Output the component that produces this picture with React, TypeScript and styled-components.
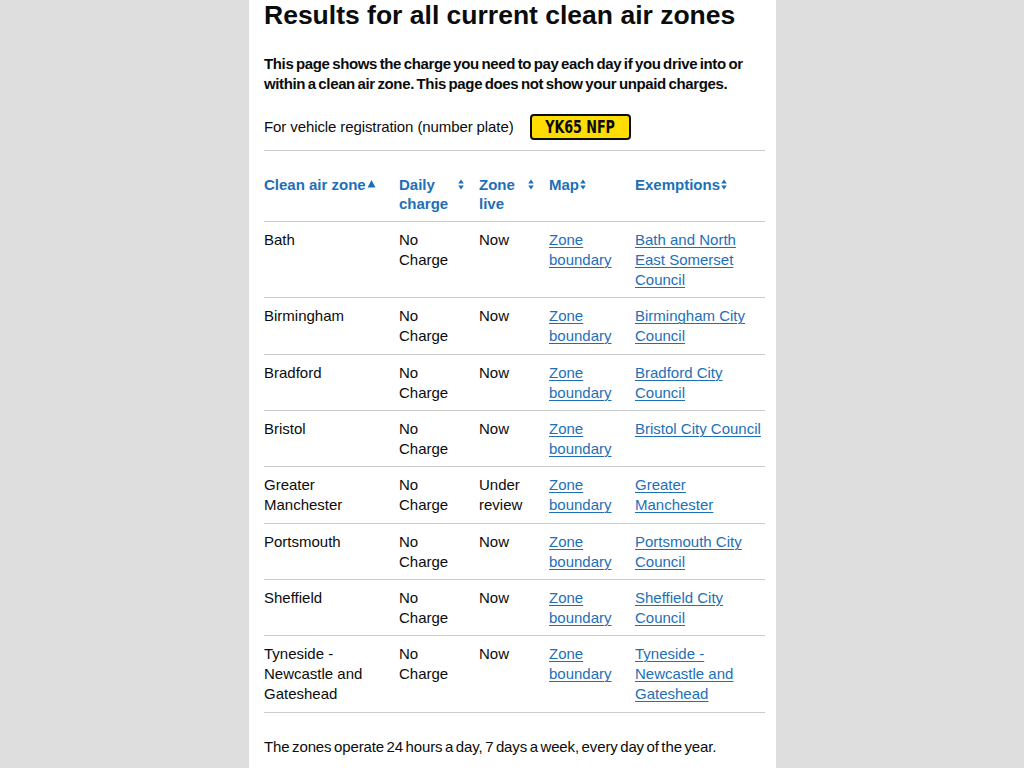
import * as React from 'react';
import styled, { createGlobalStyle } from 'styled-components';

const COLORS = {
  text: '#0b0c0c',
  link: '#1d70b8',
  border: '#c9cbcc',
  page: '#dedede',
  plate: '#ffdd00',
};

const FONT = '"Liberation Sans", Arial, sans-serif';

const GlobalStyle = createGlobalStyle`
  html, body {
    margin: 0;
    padding: 0;
    background: ${COLORS.page};
  }
  body {
    font-family: ${FONT};
    color: ${COLORS.text};
    -webkit-font-smoothing: antialiased;
  }
`;

const Page = styled.div`
  display: flex;
  justify-content: center;
  min-height: 768px;
`;

const Column = styled.main`
  box-sizing: border-box;
  width: 527px;
  margin-left: 1px;
  background: #ffffff;
  padding: 0 11px 0 15px;
`;

const Title = styled.h1`
  margin: 0;
  font-size: 26.5px;
  line-height: 30px;
  font-weight: 700;
`;

const Lead = styled.p`
  margin: 24px 0 0;
  font-size: 15px;
  line-height: 20px;
  font-weight: 700;
  letter-spacing: -0.36px;
  word-spacing: -1.2px;
`;

const PlateRow = styled.div`
  display: flex;
  align-items: center;
  gap: 16px;
  margin-top: 20px;
  font-size: 15px;
  line-height: 20px;
  letter-spacing: -0.1px;
`;

const Plate = styled.span`
  box-sizing: border-box;
  display: inline-flex;
  align-items: center;
  justify-content: center;
  width: 101px;
  height: 26px;
  background: ${COLORS.plate};
  border: 2px solid ${COLORS.text};
  border-radius: 4px;
  font-family: "DejaVu Sans Condensed", "DejaVu Sans", sans-serif;
  font-stretch: condensed;
  font-weight: 700;
  font-size: 18px;
  line-height: 20px;
`;

const PlateText = styled.span`
  display: inline-block;
  white-space: nowrap;
  transform: scaleX(0.79);
`;

const Divider = styled.hr`
  margin: 10px 0 0;
  border: 0;
  border-top: 1px solid ${COLORS.border};
`;

const Table = styled.table`
  width: 100%;
  margin-top: 15px;
  border-collapse: collapse;
  table-layout: fixed;
  font-size: 15px;
  line-height: 20px;
`;

const Col = styled.col<{ $width?: number }>`
  width: ${(p) => (p.$width ? `${p.$width}px` : 'auto')};
`;

const HeadCell = styled.th`
  padding: 9px 15px 8px 0;
  text-align: left;
  vertical-align: top;
  border-bottom: 1px solid ${COLORS.border};
  line-height: 19px;
  &:last-child {
    padding-right: 0;
  }
`;

const SortButton = styled.button`
  display: flex;
  align-items: flex-start;
  gap: 1px;
  padding: 0;
  margin: 0;
  border: 0;
  background: none;
  font: inherit;
  font-weight: 700;
  color: ${COLORS.link};
  text-align: left;
  cursor: pointer;
`;

const SortIconWrap = styled.span`
  display: inline-flex;
  flex: none;
  padding-top: 4px;
`;

const Cell = styled.td`
  padding: 8px 15px 7.35px 0;
  vertical-align: top;
  border-bottom: 1px solid ${COLORS.border};
  &:last-child {
    padding-right: 0;
  }
`;

const Link = styled.a`
  color: ${COLORS.link};
  text-decoration: underline;
  text-decoration-thickness: 1px;
  text-underline-offset: 2px;
`;

const Footnote = styled.p`
  margin: 24px 0 0;
  font-size: 15px;
  line-height: 20px;
  letter-spacing: -0.12px;
  word-spacing: -1.5px;
  white-space: nowrap;
  padding-bottom: 20px;
`;

const SortIcon: React.FC<{ dir?: 'asc' | 'none' }> = ({ dir = 'none' }) =>
  dir === 'asc' ? (
    <svg width="9" height="10" viewBox="0 0 9 10" aria-hidden>
      <path d="M4.5 1 L8.5 8.5 L0.5 8.5 Z" fill="currentColor" />
    </svg>
  ) : (
    <svg width="6" height="11" viewBox="0 0 6 11" aria-hidden>
      <path d="M3 0.5 L5.8 4.5 L0.2 4.5 Z" fill="currentColor" />
      <path d="M3 10.5 L5.8 6.5 L0.2 6.5 Z" fill="currentColor" />
    </svg>
  );

interface Zone {
  name: string;
  live: string;
  council: string;
}

const zones: Zone[] = [
  { name: 'Bath', live: 'Now', council: 'Bath and North East Somerset Council' },
  { name: 'Birmingham', live: 'Now', council: 'Birmingham City Council' },
  { name: 'Bradford', live: 'Now', council: 'Bradford City Council' },
  { name: 'Bristol', live: 'Now', council: 'Bristol City Council' },
  { name: 'Greater Manchester', live: 'Under review', council: 'Greater Manchester' },
  { name: 'Portsmouth', live: 'Now', council: 'Portsmouth City Council' },
  { name: 'Sheffield', live: 'Now', council: 'Sheffield City Council' },
  {
    name: 'Tyneside - Newcastle and Gateshead',
    live: 'Now',
    council: 'Tyneside - Newcastle and Gateshead',
  },
];

const headers: { label: string; dir: 'asc' | 'none' }[] = [
  { label: 'Clean air zone', dir: 'asc' },
  { label: 'Daily charge', dir: 'none' },
  { label: 'Zone live', dir: 'none' },
  { label: 'Map', dir: 'none' },
  { label: 'Exemptions', dir: 'none' },
];

const App: React.FC = () => (
  <Page>
    <GlobalStyle />
    <Column>
      <Title>Results for all current clean air zones</Title>
      <Lead>
        This page shows the charge you need to pay each day if you drive into or within a
        clean air zone. This page does not show your unpaid charges.
      </Lead>
      <PlateRow>
        <span>For vehicle registration (number plate)</span>
        <Plate>
          <PlateText>YK65 NFP</PlateText>
        </Plate>
      </PlateRow>
      <Divider />
      <Table>
        <colgroup>
          <Col $width={135} />
          <Col $width={80} />
          <Col $width={70} />
          <Col $width={86} />
          <Col />
        </colgroup>
        <thead>
          <tr>
            {headers.map((h) => (
              <HeadCell key={h.label} aria-sort={h.dir === 'asc' ? 'ascending' : 'none'}>
                <SortButton type="button">
                  <span>{h.label}</span>
                  <SortIconWrap>
                    <SortIcon dir={h.dir} />
                  </SortIconWrap>
                </SortButton>
              </HeadCell>
            ))}
          </tr>
        </thead>
        <tbody>
          {zones.map((z) => (
            <tr key={z.name}>
              <Cell>{z.name}</Cell>
              <Cell>No Charge</Cell>
              <Cell>{z.live}</Cell>
              <Cell>
                <Link href="#">Zone boundary</Link>
              </Cell>
              <Cell>
                <Link href="#">{z.council}</Link>
              </Cell>
            </tr>
          ))}
        </tbody>
      </Table>
      <Footnote>The zones operate 24 hours a day, 7 days a week, every day of the year.</Footnote>
    </Column>
  </Page>
);

export default App;
